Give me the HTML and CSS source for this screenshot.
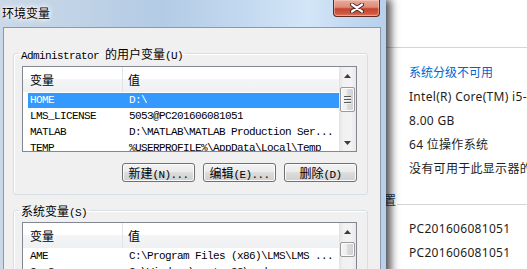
FILE: index.html
```html
<!DOCTYPE html>
<html lang="zh-CN">
<head>
<meta charset="utf-8">
<title>环境变量</title>
<link rel="stylesheet" href="styles.css">
</head>
<body>
<div class="desk">
  <div class="syswin">
    <div class="sec sec1"><span class="sec-t">系统</span><span class="sec-l"></span></div>
    <div class="row"><span class="lbl">分级:</span><span class="val link">系统分级不可用</span></div>
    <div class="row"><span class="lbl">处理器:</span><span class="val">Intel(R) Core(TM) i5-4590 CPU @ 3.30GHz</span></div>
    <div class="row"><span class="lbl">安装内存(RAM):</span><span class="val">8.00 GB</span></div>
    <div class="row"><span class="lbl">系统类型:</span><span class="val">64 位操作系统</span></div>
    <div class="row"><span class="lbl">笔和触摸:</span><span class="val">没有可用于此显示器的笔或触控输入</span></div>
    <div class="sec sec2"><span class="sec-t">计算机名称、域和工作组设置</span><span class="sec-l"></span></div>
    <div class="row"><span class="lbl">计算机名:</span><span class="val">PC201606081051</span></div>
    <div class="row"><span class="lbl">计算机全名:</span><span class="val">PC201606081051</span></div>
  </div>

  <div class="dlg">
    <div class="titlebar">
      <span class="title">环境变量</span>
      <button class="close" aria-label="关闭">
        <svg width="14" height="10" viewBox="0 0 14 10">
          <path d="M2 1.5 L12 8.5 M12 1.5 L2 8.5" stroke="#3a2622" stroke-width="4" stroke-linecap="round"/>
          <path d="M2 1.5 L12 8.5 M12 1.5 L2 8.5" stroke="#ffffff" stroke-width="2.2" stroke-linecap="round"/>
        </svg>
      </button>
    </div>
    <div class="client">
      <fieldset class="grp">
        <legend class="grp-t"><span class="m">Administrator </span>的用户变量<span class="m">(U)</span></legend>
        <div class="grp-body">
          <div class="list">
            <div class="lb">
              <div class="hdr"><div class="c1">变量</div><div class="c2">值</div></div>
              <div class="rw sel"><div class="c1 m">HOME</div><div class="c2 m">D:\</div></div>
              <div class="rw"><div class="c1 m">LMS_LICENSE</div><div class="c2 m">5053@PC201606081051</div></div>
              <div class="rw"><div class="c1 m">MATLAB</div><div class="c2 m">D:\MATLAB\MATLAB Production Ser...</div></div>
              <div class="rw"><div class="c1 m">TEMP</div><div class="c2 m">%USERPROFILE%\AppData\Local\Temp</div></div>
            </div>
            <div class="sb">
              <div class="arr"><svg width="7" height="4" viewBox="0 0 7 4"><path d="M0 4 L3.5 0 L7 4Z" fill="#3c3c3c"/></svg></div>
              <div class="thumb"><span></span><span></span><span></span></div>
              <div class="sb-fill"></div>
              <div class="arr"><svg width="7" height="4" viewBox="0 0 7 4"><path d="M0 0 L7 0 L3.5 4Z" fill="#3c3c3c"/></svg></div>
            </div>
          </div>
          <div class="btns">
            <button class="btn">新建<span class="m">(N)...</span></button>
            <button class="btn">编辑<span class="m">(E)...</span></button>
            <button class="btn">删除<span class="m">(D)</span></button>
          </div>
        </div>
      </fieldset>

      <fieldset class="grp grp2">
        <legend class="grp-t">系统变量<span class="m">(S)</span></legend>
        <div class="grp-body grp-body2">
          <div class="list">
            <div class="lb">
              <div class="hdr"><div class="c1">变量</div><div class="c2">值</div></div>
              <div class="rw"><div class="c1 m">AME</div><div class="c2 m">C:\Program Files (x86)\LMS\LMS ...</div></div>
              <div class="rw"><div class="c1 m">ComSpec</div><div class="c2 m">C:\Windows\system32\cmd.exe</div></div>
              <div class="rw"><div class="c1 m">FP_NO_HOST_CHECK</div><div class="c2 m">NO</div></div>
            </div>
            <div class="sb">
              <div class="arr"><svg width="7" height="4" viewBox="0 0 7 4"><path d="M0 4 L3.5 0 L7 4Z" fill="#3c3c3c"/></svg></div>
              <div class="thumb small"></div>
              <div class="sb-fill"></div>
            </div>
          </div>
        </div>
      </fieldset>
    </div>
  </div>
</div>
</body>
</html>
```

FILE: styles.css
```css
* { box-sizing: border-box; }
html, body { margin: 0; padding: 0; }
body {
  width: 527px;
  height: 269px;
  overflow: hidden;
  background: #fff;
  font-family: "Noto Sans CJK SC", sans-serif;
  font-size: 12px;
  color: #000;
}
.desk { position: relative; width: 527px; height: 269px; }

/* background system window */
.syswin {
  position: absolute;
  left: 240px; top: 0; right: 0; bottom: 0;
  background: #fff;
  padding-top: 34px;
  font-family: "Noto Sans", "Noto Sans CJK SC", sans-serif;
  font-size: 12px;
  color: #1e1e1e;
  white-space: nowrap;
  overflow: hidden;
}
.sec { display: flex; align-items: center; height: 18px; color: #1e395b; }
.sec-t { flex: none; }
.sec-l { flex: 1; height: 1px; background: #d4d4d4; margin: 8px 0 0 1px; }
.sec1 { margin-bottom: 8px; }
.sec2 { margin: 11px 0 7px; }
.row { display: flex; align-items: center; height: 24px; }
.lbl { width: 169px; flex: none; }
.val { letter-spacing: 0.3px; }
.link { color: #0066cc; letter-spacing: 0; }

/* dialog */
.dlg {
  position: absolute;
  left: 0; top: 0;
  width: 386px; height: 300px;
  z-index: 1;
  background: linear-gradient(90deg, #cad8e7 0%, #bfd2e6 22%, #b3cbe5 42%, #c2d8ef 62%, #d3e6f8 80%, #c0d7f0 92%, #b7d0ec 100%);
  box-shadow: 4px 0 8px 1px rgba(0, 0, 0, 0.68);
}
.titlebar {
  display: flex;
  justify-content: space-between;
  align-items: flex-start;
  height: 27px;
  padding: 0 6px 0 2px;
}
.title {
  line-height: 26px;
  font-size: 12px;
  color: #000;
  text-shadow: 0 0 6px #fff, 0 0 6px #fff, 0 0 3px #fff;
}
.close {
  width: 47px;
  height: 17px;
  padding: 0;
  margin: 0;
  border: 1px solid #5f2a22;
  border-top: 0;
  border-radius: 0 0 4px 4px;
  background: linear-gradient(#e9aa9b 0%, #dc8c78 45%, #c8442d 55%, #cf5a42 85%, #dc7d64 100%);
  box-shadow: inset 0 0 0 1px rgba(255, 220, 210, 0.45);
  display: flex;
  align-items: center;
  justify-content: center;
}
.close svg { display: block; margin-top: -1px; }

.client {
  margin: 0 5px 0 3px;
  height: 273px;
  background: #f0f0f0;
  border: 1px solid #8c99a8;
  border-bottom: 0;
  padding: 0 12px 0 9px;
  overflow: hidden;
}

.grp {
  margin: 19px 0 0;
  padding: 0;
  border: 1px solid #d5dfe5;
  border-radius: 3px;
  min-inline-size: 0;
  box-shadow: inset 1px 1px 0 #fff;
}
.grp2 { margin-top: 9px; }
.grp-t {
  margin-left: 5px;
  padding: 0 2px;
  line-height: 13px;
  height: 13px;
  font-size: 12px;
  white-space: nowrap;
}
.grp-body { padding: 6px 0 12px 8px; }
.grp-body2 { padding-top: 5px; }

.m {
  font-family: "Liberation Mono", monospace;
  font-size: 11px;
  letter-spacing: -0.6px;
}

.list {
  display: flex;
  width: 335px;
  height: 86px;
  border: 1px solid #828790;
  background: #fff;
  overflow: hidden;
}
.lb { flex: 1; overflow: hidden; white-space: nowrap; }
.hdr {
  display: flex;
  height: 25px;
  background: linear-gradient(#ffffff 0%, #ffffff 48%, #f4f5f7 48%, #eff0f2 100%);
}
.hdr .c1 {
  width: 100px;
  padding-left: 7px;
  line-height: 25px;
  border-right: 1px solid #e2e3e6;
}
.hdr .c2 { padding-left: 5px; line-height: 25px; }
.rw {
  display: flex;
  height: 16px;
  line-height: 16px;
  margin-left: 5px;
  color: #000;
}
.rw .c1 { width: 95px; padding-left: 2px; flex: none; overflow: hidden; }
.rw .c2 { padding-left: 6px; overflow: hidden; }
.sel {
  color: #fff;
  background: linear-gradient(#3399ff, #3399ff) no-repeat 0 1px / 100% 15px;
}

.sb {
  width: 17px;
  flex: none;
  display: flex;
  flex-direction: column;
  align-items: center;
  background: linear-gradient(90deg, #e3e3e3 0%, #f1f1f1 25%, #f3f3f3 70%, #e9e9e9 100%);
}
.arr {
  height: 17px;
  width: 17px;
  display: flex;
  align-items: center;
  justify-content: center;
  flex: none;
}
.thumb {
  width: 15px;
  height: 25px;
  margin-top: 3px;
  border: 1px solid #9a9a9a;
  border-radius: 2px;
  background: linear-gradient(90deg, #f6f6f6 0%, #ececec 50%, #dcdcdc 50%, #d0d0d0 100%);
  box-shadow: inset 0 0 0 1px #fbfbfb;
  display: flex;
  flex-direction: column;
  align-items: center;
  justify-content: center;
  gap: 2px;
  flex: none;
}
.thumb span {
  display: block;
  width: 7px;
  height: 1px;
  background: #5a5a5a;
  box-shadow: 0 1px 0 #f4f4f4;
}
.thumb.small { height: 15px; margin-top: 2px; }
.sb-fill { flex: 1; }

.btns {
  display: flex;
  justify-content: flex-end;
  gap: 8px;
  width: 335px;
  margin-top: 11px;
}
.btn {
  width: 73px;
  height: 19px;
  padding: 0;
  margin: 0;
  border: 1px solid #707070;
  border-radius: 3px;
  background: linear-gradient(#f2f2f2 0%, #ebebeb 50%, #dddddd 50%, #cfcfcf 100%);
  box-shadow: inset 0 0 0 1px #fbfbfb;
  font-family: "Noto Sans CJK SC", sans-serif;
  font-size: 12px;
  line-height: 17px;
  color: #000;
  white-space: nowrap;
}
```
